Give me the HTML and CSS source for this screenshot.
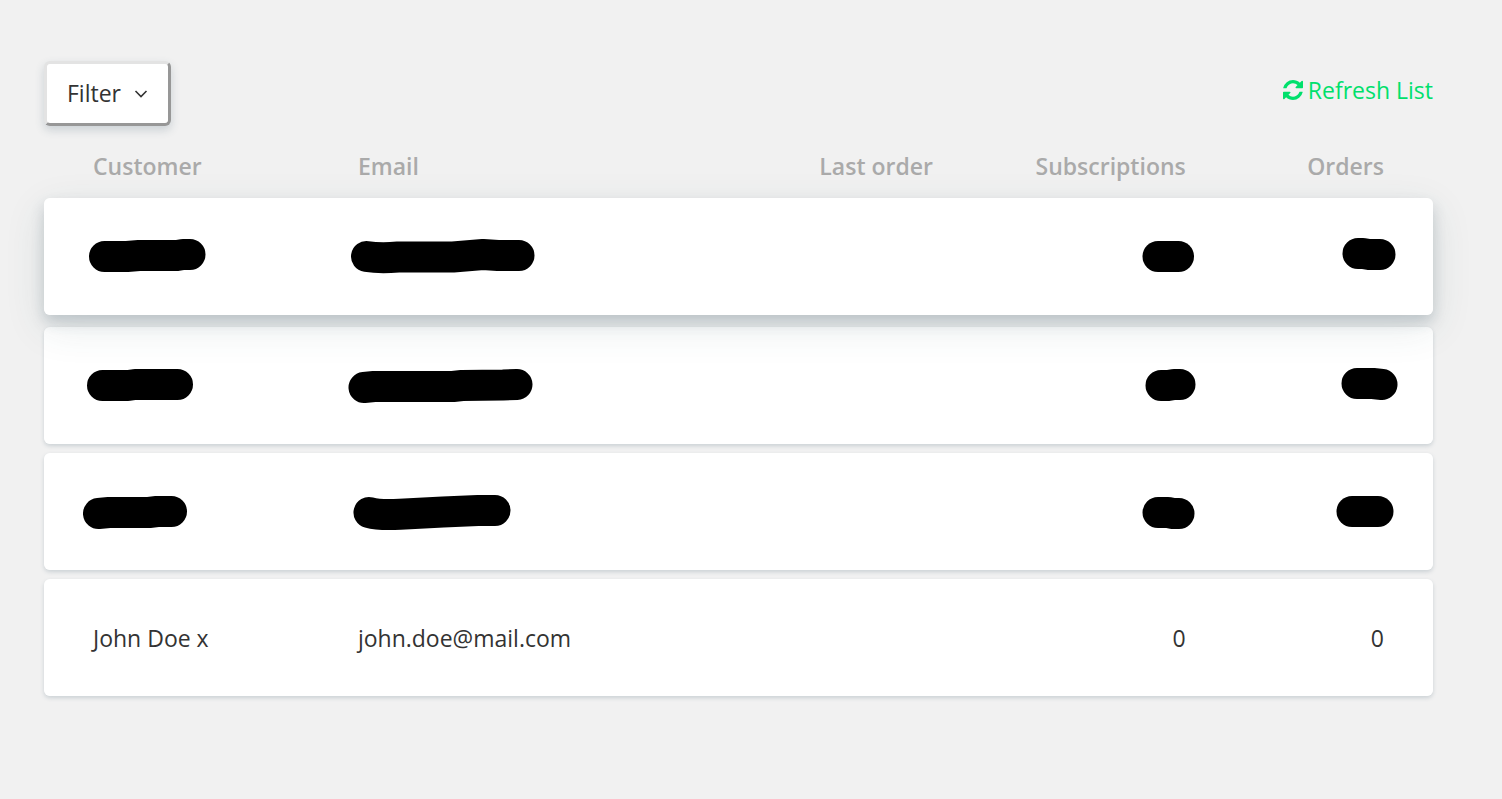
FILE: index.html
```html
<!DOCTYPE html>
<html lang="en">
<head>
    <meta charset="UTF-8">
    <title>Customers</title>
    <link rel="stylesheet" href="styles.css">
</head>
<body>
    <div class="toolbar">
        <button type="button" class="filter-button">
            Filter
            <svg class="chevron" viewBox="0 0 14 14" aria-hidden="true"><path d="M1.500 5 L7 10.500 L12.500 5"/></svg>
        </button>
        <a href="#" class="refresh-link">
            <svg class="refresh-icon" viewBox="0 0 1536 1536" aria-hidden="true"><path d="M1511 928q0 5-1 7-64 268-268 434.500T764 1536q-146 0-282.500-55T238 1324l-129 129q-19 19-45 19t-45-19-19-45V960q0-26 19-45t45-19h448q26 0 45 19t19 45-19 45l-137 137q71 66 161 102t187 36q134 0 250-65t186-179q11-17 53-117 8-23 30-23h192q13 0 22.500 9.500t9.500 22.500zm25-800v448q0 26-19 45t-45 19h-448q-26 0-45-19t-19-45 19-45l138-138Q969 256 768 256q-134 0-250 65T332 500q-11 17-53 117-8 23-30 23H50q-13 0-22.500-9.500T18 608v-7q65-268 270-434.500T768 0q146 0 284 55.500T1297 212l130-129q19-19 45-19t45 19 19 45z"/></svg>
            Refresh List
        </a>
    </div>

    <table class="customers">
        <colgroup>
            <col class="col-customer">
            <col class="col-email">
            <col class="col-last">
            <col class="col-subs">
            <col class="col-orders">
        </colgroup>
        <thead>
            <tr>
                <th>Customer</th>
                <th>Email</th>
                <th class="num">Last order</th>
                <th class="num">Subscriptions</th>
                <th class="num">Orders</th>
            </tr>
        </thead>
        <tbody>
            <tr class="raised">
                <td><svg class="mask" viewBox="0 0 200 40"><path d="M21.500 19.500 L44 19.500 L56 18.500 L94 18.500 L100 17.500 L107 17.500"/></svg></td>
                <td><svg class="mask" viewBox="0 0 200 40"><path d="M18.500 19.500 Q32 21.500 50 20 L105 20 L135 17.500 L150 18.500 L171 18.500"/></svg></td>
                <td></td>
                <td class="num"><svg class="mask mask-small" viewBox="0 0 120 40"><path d="M77 19.500 L97.500 19.500"/></svg></td>
                <td class="num"><svg class="mask mask-small" viewBox="0 0 120 40"><path d="M79 16.500 L84 16.500 L90 17.500 L101 17.500"/></svg></td>
            </tr>
            <tr>
                <td><svg class="mask" viewBox="0 0 200 40"><path d="M19.500 19.500 L45 19.500 L52 18.500 L94.500 18.500"/></svg></td>
                <td><svg class="mask" viewBox="0 0 200 40"><path d="M16 21.500 L26 20.500 L105 20.500 L114 19.500 L155 19 L169 18.500"/></svg></td>
                <td></td>
                <td class="num"><svg class="mask mask-small" viewBox="0 0 120 40"><path d="M80 19.500 L87 19.500 L93 18.500 L99 18.500"/></svg></td>
                <td class="num"><svg class="mask mask-small" viewBox="0 0 120 40"><path d="M78 17.500 L94 17.500 L103 18.500"/></svg></td>
            </tr>
            <tr>
                <td><svg class="mask" viewBox="0 0 200 40"><path d="M15.500 21.500 L26 20.500 L66 20.500 L74 19.500 L88.500 19.500"/></svg></td>
                <td><svg class="mask" viewBox="0 0 200 40"><path d="M21 20.500 Q32 23.500 52 22.200 L95 20 L130 18.500 L147 18.500"/></svg></td>
                <td></td>
                <td class="num"><svg class="mask mask-small" viewBox="0 0 120 40"><path d="M77 20.500 L87 20.500 L92 21.500 L98 21.500"/></svg></td>
                <td class="num"><svg class="mask mask-small" viewBox="0 0 120 40"><path d="M73 19.500 L99 19.500"/></svg></td>
            </tr>
            <tr>
                <td>John Doe x</td>
                <td>john.doe@mail.com</td>
                <td></td>
                <td class="num">0</td>
                <td class="num">0</td>
            </tr>
        </tbody>
    </table>
</body>
</html>
```

FILE: styles.css
```css
:root {
    --page-color: #f1f1f1;
    --text-color: #333;
    --muted-color: #aaa;
    --accent-color: #00e06c;
}

body {
    margin: 0;
    padding: 61px 69px 40px 44px;
    background: var(--page-color);
    color: var(--text-color);
    font-family: 'Open Sans', 'Noto Sans', sans-serif;
    font-size: 23px;
    line-height: 30px;
}

.toolbar {
    display: flex;
    justify-content: space-between;
    align-items: flex-start;
}

.filter-button {
    display: flex;
    align-items: center;
    gap: 13px;
    padding: 14px 20px 15px;
    border: 3px solid;
    border-color: #e3e3e3 #979797 #979797 #e3e3e3;
    border-radius: 6px;
    background: white;
    color: inherit;
    font: inherit;
    box-shadow: 0 4px 10px rgba(50,80,100,0.2);
    cursor: pointer;
}

.chevron {
    width: 14px;
    height: 14px;
    fill: none;
    stroke: currentColor;
    stroke-width: 1.6;
}

.refresh-link {
    display: flex;
    align-items: center;
    gap: 5px;
    padding-top: 14px;
    color: var(--accent-color);
    text-decoration: none;
}

.refresh-icon {
    width: 20px;
    height: 20px;
    fill: currentColor;
}

.customers {
    width: 100%;
    margin-top: 6px;
    border-collapse: separate;
    border-spacing: 0 9px;
    table-layout: fixed;
}

.col-customer {
    width: 22.6%;
}

.col-email {
    width: 23.2%;
}

.col-last {
    width: 18.2%;
}

.col-subs {
    width: 18.2%;
}

th {
    height: 49px;
    padding: 0 0 2px;
    color: var(--muted-color);
    font-weight: 600;
    text-align: left;
}

td {
    height: 117px;
    padding: 0;
    background: white;
}

th:first-child,
td:first-child {
    padding-left: 49px;
}

th:last-child,
td:last-child {
    padding-right: 49px;
}

.num {
    text-align: right;
}

tbody tr {
    border-radius: 6px;
    box-shadow: 0 2px 4px rgba(50,80,100,0.2);
}

td:first-child {
    border-radius: 6px 0 0 6px;
}

td:last-child {
    border-radius: 0 6px 6px 0;
}

/* hovered look of a row */
tbody .raised {
    transform: translateY(-3px);
    box-shadow: 0 7px 14px rgba(50,75,95,0.2), 0 12px 40px rgba(40,80,80,0.12);
}

.mask {
    display: block;
    width: 200px;
    height: 40px;
    margin-left: -10px;
    fill: none;
    stroke: black;
    stroke-width: 31;
    stroke-linecap: round;
    stroke-linejoin: round;
}

.mask-small {
    width: 120px;
    margin-left: auto;
    margin-right: -15px;
}
```
